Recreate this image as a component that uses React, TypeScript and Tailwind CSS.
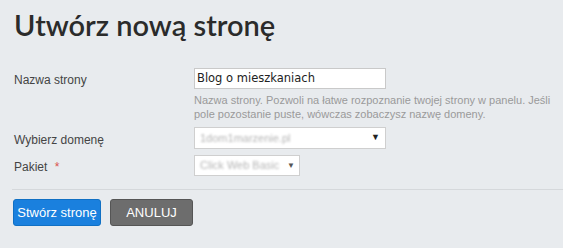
import React from "react";

export default function App() {
  return (
    <div className="min-h-[248px] w-full bg-[#e8ebee] text-[#333]">
      <div className="px-[14px] pt-[6px]">
        <h1 className="font-['Lato',sans-serif] text-[29px] font-semibold leading-[38px] text-[#2b2b2b]">
          Utwórz nową stronę
        </h1>
      </div>

      <div className="mt-[24px] grid grid-cols-[180px_1fr] gap-y-[6px] pl-[14px] pr-[10px] font-['Liberation_Sans',Arial,sans-serif] text-[12px]">
        <label className="pt-[3px] text-[#444]">Nazwa strony</label>
        <div>
          <div className="flex h-[21px] w-[192px] items-center border border-[#c9c9c9] bg-white px-[2px] font-['DejaVu_Sans',sans-serif] text-[11.5px] text-[#222]">
            Blog o mieszkaniach
          </div>
          <p className="mt-[4px] w-[358px] text-[11px] leading-[14px] text-[#9a9a9a]">
            Nazwa strony. Pozwoli na łatwe rozpoznanie twojej strony w panelu. Jeśli pole pozostanie puste, wówczas zobaczysz nazwę domeny.
          </p>
        </div>

        <label className="pt-[4px] text-[#444]">Wybierz domenę</label>
        <div className="flex h-[22px] w-[192px] items-center justify-between border border-[#cfcfcf] bg-white pl-[5px] pr-[5px]">
          <span className="text-[11px] text-[#b5b5b5] blur-[1px]">1dom1marzenie.pl</span>
          <span className="text-[9px] text-[#222]">▼</span>
        </div>

        <label className="pt-[3px] text-[#444]">
          Pakiet <span className="ml-[4px] text-[#d9534f]">*</span>
        </label>
        <div className="flex h-[21px] w-[106px] items-center justify-between border border-[#cfcfcf] bg-white pl-[5px] pr-[4px]">
          <span className="text-[11px] text-[#b5b5b5] blur-[1px]">Click Web Basic</span>
          <span className="text-[8px] text-[#555]">▼</span>
        </div>
      </div>

      <div className="ml-[12px] mt-[13px] border-t border-[#d5d8db]" />

      <div className="flex gap-[9px] pl-[13px] pt-[9px] font-['Liberation_Sans',Arial,sans-serif] text-[13px] text-white">
        <button className="h-[27px] w-[88px] rounded-[3px] border border-[#1070c4] bg-[#1a80de]">
          Stwórz stronę
        </button>
        <button className="h-[27px] w-[83px] rounded-[3px] border border-[#555] bg-[#6d6d6d]">
          ANULUJ
        </button>
      </div>
    </div>
  );
}
